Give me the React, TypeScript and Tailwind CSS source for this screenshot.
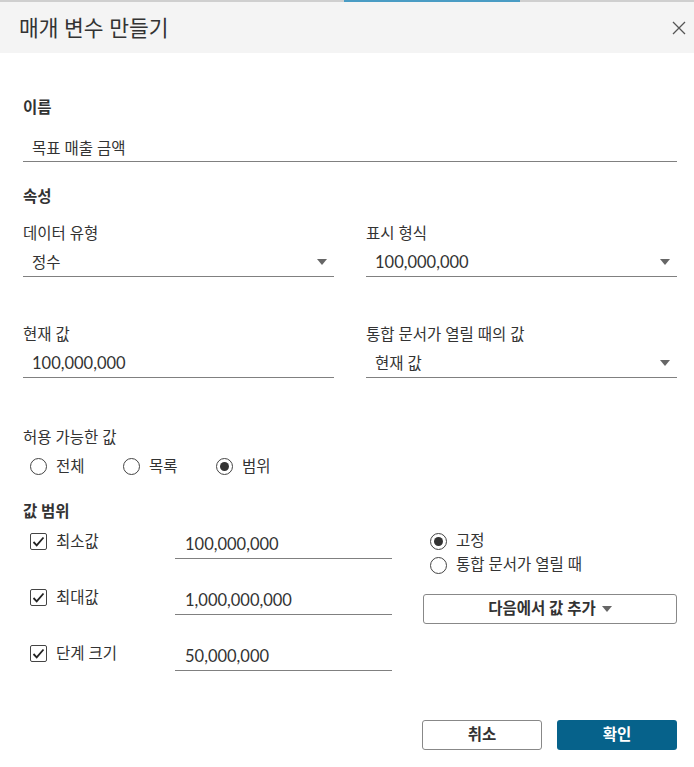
// ── Create parameter dialog ────────────────────────────────────────────────────
const FONT = { fontFamily: 'Lato, "Noto Sans CJK KR", sans-serif' };

function Caret() {
  return (
    <svg width="10" height="6" viewBox="0 0 10 6" className="shrink-0">
      <path d="M0 0h10L5 6z" fill="#666" />
    </svg>
  );
}

function Radio({ checked, label }: { checked?: boolean; label: string }) {
  return (
    <div className="flex items-center gap-[9px]">
      <span className="w-[17px] h-[17px] rounded-full border border-[#444] flex items-center justify-center shrink-0">
        {checked && <span className="w-[9px] h-[9px] rounded-full bg-[#333]" />}
      </span>
      <span>{label}</span>
    </div>
  );
}

function Check({ label }: { label: string }) {
  return (
    <div className="flex items-start gap-[9px] w-[145px] shrink-0">
      <span className="mt-[7px] w-[17px] h-[17px] rounded-[2px] border border-[#444] flex items-center justify-center shrink-0">
        <svg width="13" height="11" viewBox="0 0 13 11">
          <path d="M1.5 6l3.2 3.3L11.5 1.5" fill="none" stroke="#222" strokeWidth="1.8" />
        </svg>
      </span>
      <span className="mt-[5px] leading-5">{label}</span>
    </div>
  );
}

const isNum = (s: string) => /^[\d,]+$/.test(s);

function Field({ label, value, select }: { label: string; value: string; select?: boolean }) {
  return (
    <div>
      <div className="leading-5">{label}</div>
      <div className="mt-[9px] flex items-center justify-between pl-[9px] pr-[7px] pb-[4px] border-b border-[#808080]">
        <span className={isNum(value) ? 'leading-5 text-[16.5px]' : 'leading-5'}>{value}</span>
        {select && <Caret />}
      </div>
    </div>
  );
}

const ranges = [
  { label: '최소값', value: '100,000,000' },
  { label: '최대값', value: '1,000,000,000' },
  { label: '단계 크기', value: '50,000,000' },
];

export default function App() {
  return (
    <div className="w-[694px] h-[767px] bg-white text-[15.5px] text-[#333]" style={FONT}>
      {/* tab strip */}
      <div className="flex h-[2px] bg-[#cfcfcf]">
        <div className="w-[344px]" />
        <div className="w-[176px] bg-[#4a9cc4]" />
      </div>

      {/* header */}
      <div className="h-[51px] bg-[#f4f4f4] flex items-center justify-between pl-[19px] pr-[8px]">
        <span className="text-[21.5px] leading-6">매개 변수 만들기</span>
        <svg width="14" height="14" viewBox="0 0 14 14">
          <path d="M1 1l12 12M13 1L1 13" stroke="#555" strokeWidth="1.3" />
        </svg>
      </div>

      <div className="pl-[23px] pr-[17px]">
        <div className="mt-[44px] leading-5 font-bold">이름</div>
        <div className="mt-[11px] pt-[10px] pb-[3px] pl-[9px] border-b border-[#808080] leading-5">
          목표 매출 금액
        </div>

        <div className="mt-[24px] leading-5 font-bold">속성</div>
        <div className="mt-[17px] grid grid-cols-2 gap-x-[32px]">
          <Field label="데이터 유형" value="정수" select />
          <Field label="표시 형식" value="100,000,000" select />
        </div>
        <div className="mt-[47px] grid grid-cols-2 gap-x-[32px]">
          <Field label="현재 값" value="100,000,000" />
          <Field label="통합 문서가 열릴 때의 값" value="현재 값" select />
        </div>

        <div className="mt-[49px] leading-5">허용 가능한 값</div>
        <div className="mt-[9px] pl-[7px] flex leading-5">
          <div className="w-[93px]"><Radio label="전체" /></div>
          <div className="w-[93px]"><Radio label="목록" /></div>
          <div className="w-[93px]"><Radio label="범위" checked /></div>
        </div>

        <div className="mt-[25px] leading-5 font-bold">값 범위</div>
        <div className="mt-[5px] flex">
          <div className="w-[369px] flex flex-col gap-[23px] pl-[7px]">
            {ranges.map((r) => (
              <div key={r.label} className="flex">
                <Check label={r.label} />
                <div className="w-[217px] pt-[8px] pb-[4px] pl-[10px] border-b border-[#808080] leading-5 text-[16.5px]">
                  {r.value}
                </div>
              </div>
            ))}
          </div>
          <div className="ml-[31px] w-[255px]">
            <div className="mt-[3px] pl-[7px] flex flex-col">
              <div className="h-6 flex items-center"><Radio label="고정" checked /></div>
              <div className="h-6 flex items-center"><Radio label="통합 문서가 열릴 때" /></div>
            </div>
            <button className="mt-[17px] w-full h-[30px] rounded-[3px] border border-[#888] font-bold flex items-center justify-center gap-[6px]">
              다음에서 값 추가
              <Caret />
            </button>
          </div>
        </div>

        <div className="mt-[49px] flex justify-end gap-[15px]">
          <button className="w-[120px] h-[30px] rounded-[3px] border border-[#888] font-bold">취소</button>
          <button className="w-[120px] h-[30px] rounded-[3px] bg-[#06628b] text-white font-bold">확인</button>
        </div>
      </div>
    </div>
  );
}
